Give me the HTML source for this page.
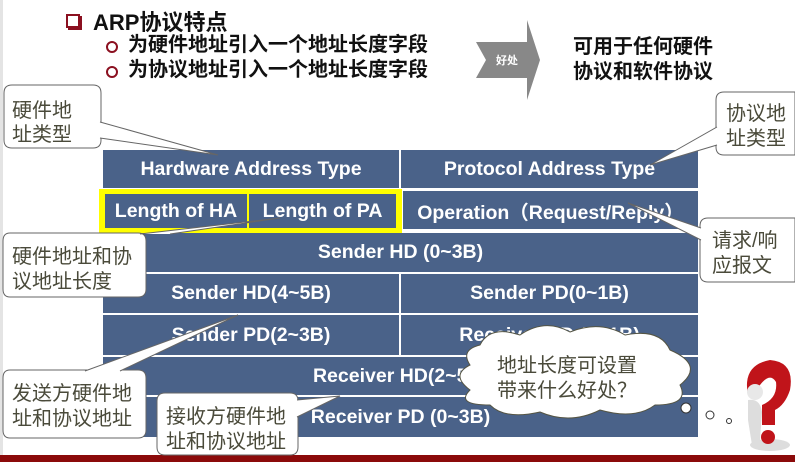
<!DOCTYPE html>
<html><head><meta charset="utf-8"><style>
*{margin:0;padding:0;box-sizing:border-box}
body{width:795px;height:462px;position:relative;background:#fff;overflow:hidden;font-family:"Liberation Sans","Noto Sans CJK SC",sans-serif}
.a{position:absolute}
.c{position:absolute;background:#4a6289;color:#fff;font-weight:bold;font-size:19.5px;display:flex;align-items:center;justify-content:center;white-space:nowrap}
.t{font-family:"Liberation Sans","Noto Sans CJK SC",sans-serif;font-size:20px;fill:#4a4a3a}
</style></head><body>
<div class="a" style="left:0;top:0;width:3px;height:462px;background:#e4e4e4"></div>
<div class="a" style="left:0;top:455px;width:795px;height:7px;background:#8b0a0a"></div>
<div class="a" style="left:66px;top:14px;width:14px;height:14px;border:2px solid #8b1020;box-shadow:2px 2px 0 #8b1020"></div>
<div class="a" style="left:93px;top:5px;font-size:22px;font-weight:bold;color:#111">ARP协议特点</div>
<div class="a" style="left:106px;top:41px;width:12px;height:12px;border:2px solid #8b1020;border-radius:50%"></div>
<div class="a" style="left:106px;top:66px;width:12px;height:12px;border:2px solid #8b1020;border-radius:50%"></div>
<div class="a" style="left:128px;top:33px;font-size:20px;font-weight:bold;color:#111;line-height:25px">为硬件地址引入一个地址长度字段<br>为协议地址引入一个地址长度字段</div>
<svg class="a" style="left:470px;top:18px" width="75" height="85"><polygon points="6,24 57,24 57,2 70,42 57,82 57,60 6,60 16,42" fill="#888"/><text x="26" y="46" font-size="11" fill="#fff" font-weight="bold" font-family="Noto Sans CJK SC">好处</text></svg>
<div class="a" style="left:573px;top:35px;font-size:20px;font-weight:bold;color:#111;line-height:25px">可用于任何硬件<br>协议和软件协议</div>

<div class="c" style="left:103px;top:150px;width:296px;height:38px">Hardware Address Type</div>
<div class="c" style="left:401px;top:150px;width:297px;height:38px">Protocol Address Type</div>
<div class="a" style="left:99px;top:189px;width:303px;height:44px;background:#ffff00"></div>
<div class="c" style="left:105px;top:194px;width:142px;height:34px">Length of HA</div>
<div class="c" style="left:249px;top:194px;width:147px;height:34px">Length of PA</div>
<div class="c" style="left:403px;top:191px;width:295px;height:38px">Operation（Request/Reply）</div>
<div class="c" style="left:103px;top:233px;width:595px;height:39px">Sender HD (0~3B)</div>
<div class="c" style="left:103px;top:274px;width:296px;height:39px">Sender HD(4~5B)</div>
<div class="c" style="left:401px;top:274px;width:297px;height:39px">Sender PD(0~1B)</div>
<div class="c" style="left:103px;top:315px;width:296px;height:40px">Sender PD(2~3B)</div>
<div class="c" style="left:401px;top:315px;width:297px;height:40px">Receiver HD (0~1B)</div>
<div class="c" style="left:103px;top:357px;width:595px;height:38px">Receiver HD(2~5B)</div>
<div class="c" style="left:103px;top:397px;width:595px;height:40px">Receiver PD (0~3B)</div>

<svg class="a" style="left:0;top:0" width="795" height="462">
<g fill="#fff" stroke="#666" stroke-width="1">
<path d="M12,85 H93 Q101,85 101,93 V140 Q101,148 93,148 H12 Q4,148 4,140 V93 Q4,85 12,85 Z"/>
<path d="M100,122 L218,155 L100,138"/>
<path d="M724,92 H795 V155 H724 Q716,155 716,147 V100 Q716,92 724,92 Z"/>
<path d="M717,127 L650,165 L717,145"/>
<path d="M708,218 H795 V282 H708 Q700,282 700,274 V226 Q700,218 708,218 Z"/>
<path d="M701,240 L628,203 L701,228"/>
<path d="M10,233 H138 Q146,233 146,241 V289 Q146,297 138,297 H10 Q3,297 3,289 V241 Q3,233 10,233 Z"/>
<path d="M140,234 L280,218 L170,234"/>
<path d="M10,370 H138 Q146,370 146,378 V430 Q146,438 138,438 H10 Q3,438 3,430 V378 Q3,370 10,370 Z"/>
<path d="M85,371 L238,315 L120,371"/>
<path d="M165,393 H290 Q298,393 298,401 V447 Q298,455 290,455 H165 Q157,455 157,447 V401 Q157,393 165,393 Z"/>
<path d="M297,400 L340,396 L297,417"/>
<path d="M480,345 Q490,325 520,335 Q545,318 570,332 Q600,320 625,335 Q660,328 670,350 Q705,365 680,385 Q690,405 655,405 Q635,420 600,410 Q570,425 540,412 Q505,420 490,405 Q455,405 470,390 Q450,375 470,365 Q460,350 480,345 Z" stroke="#554"/>
</g>
<g fill="none" stroke="#333"><circle cx="686" cy="408" r="5" fill="#fff"/><circle cx="710" cy="415" r="4"/><circle cx="729" cy="421" r="2.5"/></g>
<text class="t" x="12" y="117">硬件地</text><text class="t" x="12" y="141">址类型</text>
<text class="t" x="726" y="120">协议地</text><text class="t" x="726" y="145">址类型</text>
<text class="t" x="712" y="247">请求/响</text><text class="t" x="712" y="272">应报文</text>
<text class="t" x="12" y="263">硬件地址和协</text><text class="t" x="12" y="288">议地址长度</text>
<text class="t" x="12" y="400">发送方硬件地</text><text class="t" x="12" y="425">址和协议地址</text>
<text class="t" x="166" y="423">接收方硬件地</text><text class="t" x="166" y="448">址和协议地址</text>
<text class="t" x="497" y="372">地址长度可设置</text><text class="t" x="497" y="397">带来什么好处？</text>
<ellipse cx="770" cy="445" rx="20" ry="6" fill="#ddd"/>
<path d="M748,395 Q742,365 770,360 Q795,362 790,390 Q785,405 775,410 L775,425 L762,425 L762,405 Q778,398 776,382 Q770,372 760,385 Z" fill="#c0141a"/>
<circle cx="768" cy="437" r="7" fill="#c0141a"/>
<circle cx="755" cy="392" r="8" fill="#e8e8e8"/>
<path d="M748,400 Q760,398 762,412 L760,440 L752,445 L748,420 Z" fill="#ddd"/>
</svg>
</body></html>
